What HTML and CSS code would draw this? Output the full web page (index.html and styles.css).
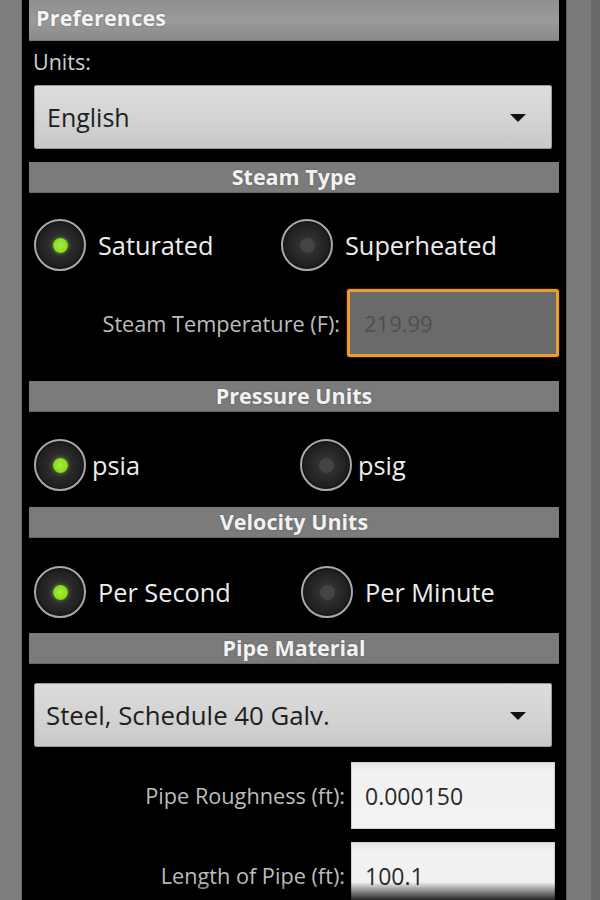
FILE: index.html
```html
<!DOCTYPE html>
<html>
<head>
<meta charset="utf-8">
<link rel="stylesheet" href="styles.css">
</head>
<body>
<div class="frame">
  <div class="edge-left"></div>
  <div class="panel">
    <div class="title-bar">Preferences</div>
    <div class="field-label">Units:</div>
    <div class="spinner spinner-units">
      <span>English</span>
      <svg class="arrow" width="18" height="10" viewBox="0 0 18 10"><path d="M1 1 L17 1 L9 9 Z" fill="#111"/></svg>
    </div>

    <div class="section section-steam">Steam Type</div>
    <div class="radio-row row-steam">
      <div class="radio-item item-first">
        <span class="radio checked"></span><span class="radio-text gap-wide">Saturated</span>
      </div>
      <div class="radio-item">
        <span class="radio"></span><span class="radio-text gap-wide">Superheated</span>
      </div>
    </div>
    <div class="input-row row-temp">
      <span class="input-label">Steam Temperature (F):</span>
      <div class="input input-disabled">219.99</div>
    </div>

    <div class="section section-pressure">Pressure Units</div>
    <div class="radio-row row-pressure">
      <div class="radio-item item-first item-pressure">
        <span class="radio checked"></span><span class="radio-text gap-narrow">psia</span>
      </div>
      <div class="radio-item">
        <span class="radio"></span><span class="radio-text gap-narrow">psig</span>
      </div>
    </div>

    <div class="section section-velocity">Velocity Units</div>
    <div class="radio-row row-velocity">
      <div class="radio-item item-first item-velocity">
        <span class="radio checked"></span><span class="radio-text gap-wide">Per Second</span>
      </div>
      <div class="radio-item">
        <span class="radio"></span><span class="radio-text gap-wide">Per Minute</span>
      </div>
    </div>

    <div class="section section-pipe">Pipe Material</div>
    <div class="spinner spinner-pipe">
      <span>Steel, Schedule 40 Galv.</span>
      <svg class="arrow" width="18" height="10" viewBox="0 0 18 10"><path d="M1 1 L17 1 L9 9 Z" fill="#111"/></svg>
    </div>
    <div class="input-row row-rough">
      <span class="input-label">Pipe Roughness (ft):</span>
      <div class="input input-white">0.000150</div>
    </div>
    <div class="input-row row-length">
      <span class="input-label">Length of Pipe (ft):</span>
      <div class="input input-white">100.1</div>
    </div>
    <div class="fade"></div>
  </div>
  <div class="edge-right"><div class="edge-right-dark"></div></div>
</div>
</body>
</html>
```

FILE: styles.css
```css
* { box-sizing: border-box; }
html, body {
  margin: 0;
  padding: 0;
  width: 600px;
  height: 900px;
  overflow: hidden;
  background: #7b7b7b;
  font-family: "Open Sans", "Noto Sans", sans-serif;
}
.frame {
  display: flex;
  width: 600px;
  height: 900px;
}
.edge-left {
  width: 22px;
  background: #7d7d7d;
  border-right: 1px solid #6a6a6a;
}
.panel {
  position: relative;
  width: 544px;
  height: 900px;
  background: #000;
  padding: 0 7px 0 7px;
  display: flex;
  flex-direction: column;
  overflow: hidden;
}
.edge-right {
  flex: 1;
  background: #7a7a7a;
  border-left: 1px solid #5e5e5e;
  display: flex;
  justify-content: flex-end;
}
.edge-right-dark {
  width: 9px;
  background: #686868;
}
.title-bar {
  height: 41px;
  flex: none;
  background: linear-gradient(#8f8f8f, #9a9a9a 50%, #8a8a8a);
  border-bottom: 1px solid #777;
  color: #f4f4f4;
  font-weight: 700;
  font-size: 21.5px;
  padding: 1px 0 0 7px;
  line-height: 34px;
  letter-spacing: 0.2px;
  text-shadow: 0 0 2px rgba(0,0,0,0.35);
}
.field-label {
  color: #cfcfcf;
  font-size: 21.5px;
  line-height: 28px;
  margin-top: 7px;
  padding-left: 4px;
}
.spinner {
  flex: none;
  height: 64px;
  margin: 9px 7px 0 5px;
  background: linear-gradient(#dcdcdc, #d2d2d2 60%, #c8c8c8);
  border: 1px solid #9a9a9a;
  border-radius: 2px;
  display: flex;
  align-items: center;
  justify-content: space-between;
  padding: 0 24px 0 12px;
  color: #1e1e1e;
  font-size: 25px;
}
.spinner-pipe { margin-top: 19px; font-size: 25.8px; padding-left: 11px; }
.arrow { display: block; margin-top: 2px; }
.section {
  flex: none;
  height: 31px;
  background: #7b7b7b;
  border-bottom: 1px solid #666;
  color: #f2f2f2;
  font-weight: 700;
  font-size: 21.5px;
  line-height: 30px;
  text-align: center;
  text-shadow: 0 0 2px rgba(0,0,0,0.3);
}
.section-steam { margin-top: 13px; }
.section-pressure { margin-top: 24px; }
.section-velocity { margin-top: 16px; }
.section-pipe { margin-top: 15px; }

.radio-row {
  display: flex;
  height: 52px;
  flex: none;
  padding-left: 5px;
}
.row-steam { margin-top: 26px; }
.row-pressure { margin-top: 27px; }
.row-velocity { margin-top: 28px; }
.radio-item {
  display: flex;
  align-items: center;
}
.item-first { width: 247px; }
.item-pressure { width: 266px; }
.item-velocity { width: 267px; }
.radio {
  flex: none;
  width: 52px;
  height: 52px;
  border-radius: 50%;
  border: 2px solid #a9a9a9;
  background: radial-gradient(circle, #3a3a3a 0, #2e2e2e 10px, #262626 16px, #1c1c1c 24px);
  box-shadow: inset 0 0 0 1px #111;
  position: relative;
}
.radio::after {
  content: "";
  position: absolute;
  left: 50%;
  top: 50%;
  width: 15px;
  height: 15px;
  margin: -7.5px 0 0 -7.5px;
  border-radius: 50%;
  background: #444;
}
.radio.checked::after {
  background: radial-gradient(circle, #a8ef3c 0, #8bdc22 60%, #6fb51a 100%);
  box-shadow: 0 0 4px rgba(140,220,40,0.6);
}
.radio-text {
  color: #ededed;
  font-size: 25.3px;
}
.gap-wide { margin-left: 12px; }
.gap-narrow { margin-left: 6px; }

.input-row {
  flex: none;
  display: flex;
  align-items: center;
  justify-content: flex-end;
}
.row-temp { margin-top: 18px; height: 68px; }
.row-rough { margin-top: 15px; height: 67px; padding-right: 4px; }
.row-length { margin-top: 13px; height: 67px; padding-right: 4px; }
.input-label {
  color: #bdbdbd;
  font-size: 21.7px;
  margin-right: 7px;
}
.row-rough .input-label, .row-length .input-label { margin-right: 6px; }
.input {
  height: 100%;
  display: flex;
  align-items: center;
  font-size: 23px;
}
.input-disabled {
  width: 212px;
  background: #6a6a6a;
  border: 3px solid #ec9a32;
  border-radius: 3px;
  box-shadow: 0 0 2px #a06018;
  color: #505050;
  padding-left: 14px;
  font-size: 22px;
}
.input-white {
  width: 204px;
  background: linear-gradient(#e4e4e4, #f1f1f1 8px, #f2f2f2);
  border: 1px solid #cfcfcf;
  color: #2a2a2a;
  padding-left: 13px;
}
.fade {
  position: absolute;
  left: 0;
  right: 0;
  bottom: 0;
  height: 18px;
  background: linear-gradient(rgba(0,0,0,0), rgba(0,0,0,0.85));
}
```
